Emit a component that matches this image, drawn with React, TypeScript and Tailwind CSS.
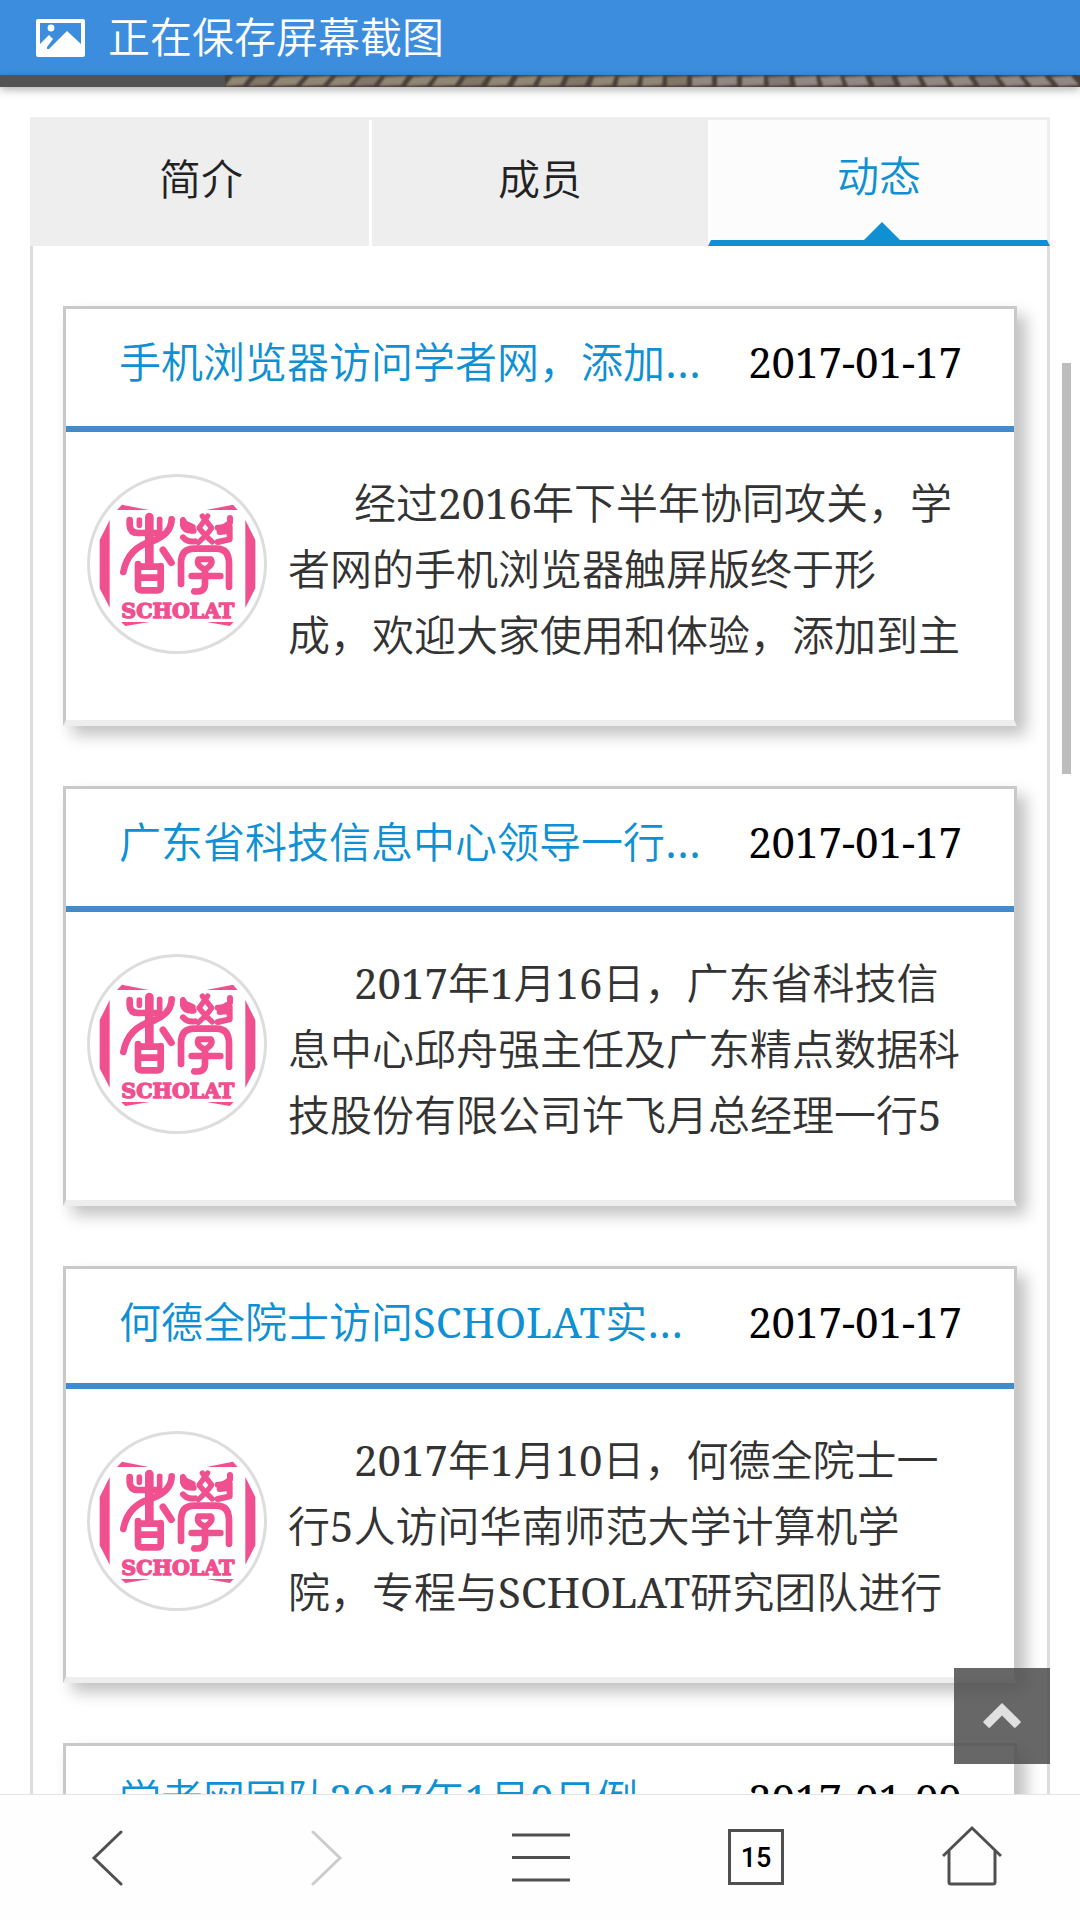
import React from "react";

// Serif face for Latin letters and digits, Chinese sans for everything else.
const face = "font-['Noto_Serif','Noto_Sans_CJK_SC',serif]";

// Latin runs carry the regular weight, Chinese runs the demi-light one.
function Mixed({ text }: { text: string }) {
  const parts = text.split(/([0-9A-Za-z.…-]+)/).filter(Boolean);
  return (
    <>
      {parts.map((p, i) =>
        /^[0-9A-Za-z.…-]+$/.test(p) ? (
          <span key={i} className="font-normal">
            {p}
          </span>
        ) : (
          <React.Fragment key={i}>{p}</React.Fragment>
        ),
      )}
    </>
  );
}

function Logo() {
  return (
    <svg viewBox="50 42 540 540" className="size-full" fill="none" stroke="#f0508f" strokeWidth="20" strokeLinecap="round" strokeLinejoin="round">
      <g fill="#f0508f" stroke="none">
        <path d="M118 180V443L88 385V240Z" />
        <path d="M525 180L555 240V385L525 443Z" />
        <path d="M155 134L235 150H140Z" />
        <path d="M408 150L488 134L502 150Z" />
        <path d="M152 486H238L165 498Z" />
        <path d="M408 486H490L478 498Z" />
      </g>
      <path d="M178 180V196Q180 218 202 219H268" />
      <path d="M207 180V196M268 178V208" strokeWidth="17" />
      <path d="M237 171V312" strokeWidth="26" />
      <path d="M304 178Q303 220 250 242Q172 262 159 336" />
      <path d="M278 270L303 308" strokeWidth="21" />
      <path d="M203 312V380Q203 391 214 391H261Q271 391 271 380V318M205 320H269M205 353H269" />
      <g strokeWidth="18">
        <path d="M338 180L344 190L367 201M338 182V196Q342 214 370 212M338 232Q352 248 374 244" />
        <path d="M412 168L386 204Q400 222 426 246M396 168L424 204Q412 222 384 248" strokeWidth="16" />
        <path d="M479 174V188Q462 204 442 203M478 200V212L448 216M478 214V238L442 246" />
      </g>
      <path d="M332 372V310Q332 266 372 266H438Q476 266 476 310V380" />
      <path d="M384 298H422Q430 314 404 328Q376 318 384 298Z" strokeWidth="18" />
      <path d="M404 330V374Q402 398 372 394M364 348H450" />
      <text x="153" y="475" textLength="339" lengthAdjust="spacingAndGlyphs" fill="#f0508f" strokeWidth="4" className="font-['DejaVu_Serif',serif] text-[59px] font-bold">
        SCHOLAT
      </text>
    </svg>
  );
}

type Item = { title: string; date: string; lines: string[]; head: string };

const items: Item[] = [
  {
    title: "手机浏览器访问学者网，添加…",
    date: "2017-01-17",
    head: "h-[123px]",
    lines: ["经过2016年下半年协同攻关，学", "者网的手机浏览器触屏版终于形", "成，欢迎大家使用和体验，添加到主"],
  },
  {
    title: "广东省科技信息中心领导一行…",
    date: "2017-01-17",
    head: "h-[123px]",
    lines: ["2017年1月16日，广东省科技信", "息中心邱舟强主任及广东精点数据科", "技股份有限公司许飞月总经理一行5"],
  },
  {
    title: "何德全院士访问SCHOLAT实…",
    date: "2017-01-17",
    head: "h-[120px]",
    lines: ["2017年1月10日，何德全院士一", "行5人访问华南师范大学计算机学", "院，专程与SCHOLAT研究团队进行"],
  },
  {
    title: "学者网团队2017年1月9日例…",
    date: "2017-01-09",
    head: "h-[120px]",
    lines: [],
  },
];

function Card({ item }: { item: Item }) {
  return (
    <article className="border-[3px] border-b-[6px] border-[#c9c9c9] border-b-[#eee] bg-white shadow-[9px_9px_15px_#c1c1c1]">
      <header className={`flex items-start justify-between border-b-[6px] border-[#428bca] pl-[53px] pr-[52px] pt-[20px] ${item.head}`}>
        <h2 className="whitespace-nowrap leading-[66px] text-[#0e90d2]">
          <Mixed text={item.title} />
        </h2>
        <time className="whitespace-nowrap leading-[66px] text-black">
          <Mixed text={item.date} />
        </time>
      </header>
      <div className="flex h-[288px] gap-[21px] pl-[21px] pt-[42px] text-[#333]">
        <div className="size-[180px] shrink-0 overflow-hidden rounded-full outline-[3px] -outline-offset-[3px] outline-[#ddd]">
          <Logo />
        </div>
        <div className="-mt-[4px]">
          {item.lines.map((l, i) => (
            <p key={i} className="h-[66px] whitespace-nowrap leading-[66px] first:pl-[66px]">
              <Mixed text={l} />
            </p>
          ))}
        </div>
      </div>
    </article>
  );
}

// Upper edge of the paved photo: [x, width, lean] for every visible stone.
const stones: [number, number, number][] = [
  [0, 18, 7], [23, 19, 8], [47, 24, 8], [76, 22, 8], [103, 21, 8], [129, 20, 7], [154, 22, 6], [181, 21, 7],
  [207, 23, 6], [235, 21, 6], [262, 20, 5], [288, 20, 5], [313, 22, 4], [340, 20, 4], [366, 21, 3], [392, 20, 2],
  [417, 20, 1], [442, 20, 0], [467, 20, 0], [492, 20, 0], [517, 22, 0], [544, 21, -1], [571, 22, -2], [598, 20, -3],
  [623, 21, -4], [650, 20, -4], [676, 20, -4], [702, 21, -5], [729, 20, -6], [755, 20, -6], [781, 20, -7], [807, 20, -8], [834, 20, -8],
];

function Mosaic() {
  return (
    <svg viewBox="0 0 855 12" className="h-[12px] w-[855px] bg-[#4a3f38]">
      <g className="blur-[1px]">
        {stones.map(([x, w, lean], i) => (
          <path
            key={x}
            fill={i < 18 ? "#958a79" : "#968b87"}
            opacity={i % 4 === 1 ? 0.75 : 0.95}
            d={`M${x + lean} 2L${x + w + lean} 1L${x + w} 10L${x} 11Z`}
          />
        ))}
      </g>
    </svg>
  );
}

export default function App() {
  return (
    <div lang="zh-CN" className={`relative h-[1920px] w-[1080px] overflow-hidden bg-white text-[42px] font-[350] ${face}`}>
      <div className="h-[1794px] overflow-hidden">
        <div className="flex h-[75px] items-center bg-[#3c8dde] pl-[36px] text-white">
          <svg viewBox="0 0 49 38" className="h-[38px] w-[49px]">
            <path
              fill="currentColor"
              fillRule="evenodd"
              d="M2 0H47Q49 0 49 2V36Q49 38 47 38H2Q0 38 0 36V2Q0 0 2 0ZM4 4V25L13 16L17 20L11 28V30H13L31 12L45 25V4Z"
            />
            <circle cx="15" cy="9" r="3.4" fill="currentColor" />
          </svg>
          <span className="-mt-[2px] ml-[23px] leading-[66px]">正在保存屏幕截图</span>
        </div>
        <div className="flex h-[12px] bg-[#535353] pl-[225px] shadow-[0_3px_9px_rgba(0,0,0,0.3)]">
          <Mosaic />
        </div>

        <section className="mx-[30px] mt-[30px]">
          <nav className="flex h-[129px] border-t-[3px] border-[#eee] text-[#222]">
            <div className="flex w-[339px] items-start justify-center bg-[#eee] pl-[3px] pt-[26px] leading-[66px]">简介</div>
            <div className="flex w-[339px] items-start justify-center border-l-[3px] border-white bg-[#eee] pt-[26px] leading-[66px]">成员</div>
            <div className="relative flex w-[342px] items-start justify-center border-x-[3px] border-b-[6px] border-l-white border-r-[#eee] border-b-[#0e90d2] bg-[#fcfcfc] pt-[23px] leading-[66px] text-[#0e90d2]">
              动态
              <svg viewBox="0 0 36 18" className="absolute bottom-0 left-[153px] h-[18px] w-[36px]">
                <path d="M18 0L36 18H0Z" fill="#0e90d2" />
              </svg>
            </div>
          </nav>
          <div className="flex flex-col gap-[60px] border-x-[3px] border-[#ddd] px-[30px] pt-[60px]">
            {items.map((it, i) => (
              <Card key={i} item={it} />
            ))}
          </div>
        </section>
      </div>

      <footer className="flex h-[126px] items-start border-t border-[#e4e4e4] bg-[#fefefe] text-[#505050]">
        <div className="flex w-[216px] justify-center pt-[35px]">
          <svg viewBox="0 0 32 56" className="-ml-[3px] h-[56px] w-[32px]" fill="none" stroke="currentColor" strokeWidth="3" strokeLinecap="round">
            <path d="M30 2L3 28L30 54" />
          </svg>
        </div>
        <div className="flex w-[216px] justify-center pt-[35px] text-[#ccc]">
          <svg viewBox="0 0 32 56" className="ml-[5px] h-[56px] w-[32px]" fill="none" stroke="currentColor" strokeWidth="3" strokeLinecap="round">
            <path d="M2 2L29 28L2 54" />
          </svg>
        </div>
        <div className="flex w-[216px] justify-center pt-[38px]">
          <svg viewBox="0 0 58 50" className="ml-[1px] h-[50px] w-[58px]" fill="none" stroke="currentColor" strokeWidth="3">
            <path d="M0 2H58M0 24.5H58M0 47H58" />
          </svg>
        </div>
        <div className="flex w-[216px] justify-center pt-[34px]">
          <div className="flex size-[56px] items-center justify-center border-[3px] border-[#505050] pt-[2px] font-[Roboto,sans-serif] text-[27px] font-medium text-black">15</div>
        </div>
        <div className="flex w-[216px] justify-center pt-[30px]">
          <svg viewBox="0 0 60 62" className="h-[62px] w-[60px]" fill="none" stroke="currentColor" strokeWidth="3" strokeLinejoin="round">
            <path d="M1 31L30 3L59 31" strokeLinejoin="miter" />
            <path d="M7 26V57Q7 59 9 59H51Q53 59 53 57V26" />
          </svg>
        </div>
      </footer>

      <div className="absolute left-[1062px] top-[363px] h-[411px] w-[9px] bg-[#bdbdbd]" />
      <div className="absolute left-[954px] top-[1668px] flex size-[96px] justify-center bg-[rgba(76,76,76,0.85)] pt-[35px]">
        <svg viewBox="0 0 38 26" className="h-[26px] w-[38px]">
          <path d="M19 0L37.4 18.2Q38.2 19 37.4 19.8L32.6 24.6Q31.8 25.4 31 24.6L19 12.6L7 24.6Q6.2 25.4 5.4 24.6L0.6 19.8Q-0.2 19 0.6 18.2Z" fill="#e0e0e0" />
        </svg>
      </div>
    </div>
  );
}
